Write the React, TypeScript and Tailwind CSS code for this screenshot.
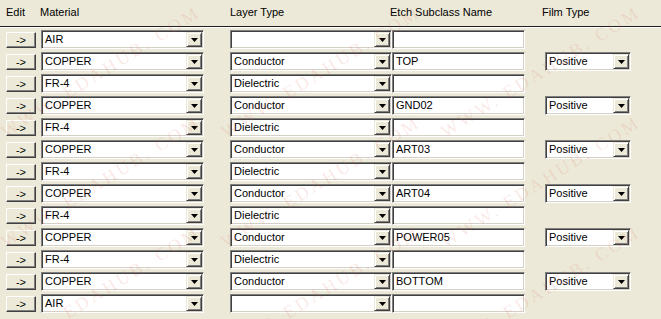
type Row = { material: string; layer: string; etch: string; film: string };

const rows: Row[] = [
  { material: "AIR", layer: "", etch: "", film: "" },
  { material: "COPPER", layer: "Conductor", etch: "TOP", film: "Positive" },
  { material: "FR-4", layer: "Dielectric", etch: "", film: "" },
  { material: "COPPER", layer: "Conductor", etch: "GND02", film: "Positive" },
  { material: "FR-4", layer: "Dielectric", etch: "", film: "" },
  { material: "COPPER", layer: "Conductor", etch: "ART03", film: "Positive" },
  { material: "FR-4", layer: "Dielectric", etch: "", film: "" },
  { material: "COPPER", layer: "Conductor", etch: "ART04", film: "Positive" },
  { material: "FR-4", layer: "Dielectric", etch: "", film: "" },
  { material: "COPPER", layer: "Conductor", etch: "POWER05", film: "Positive" },
  { material: "FR-4", layer: "Dielectric", etch: "", film: "" },
  { material: "COPPER", layer: "Conductor", etch: "BOTTOM", film: "Positive" },
  { material: "AIR", layer: "", etch: "", film: "" },
];

// watermark tiles, start points of each diagonal line
const marks: [number, number][] = [];
for (let j = 0; j < 3; j++) {
  for (let i = 0; i < 3; i++) {
    marks.push([10 + 220 * i, 140 + 110 * j]);
  }
}

const sunken =
  "border border-t-[#808080] border-l-[#808080] border-b-white border-r-white shadow-[inset_1px_1px_0_#404040,inset_-1px_-1px_0_#d4d0c8] bg-white";

function DropArrow() {
  return (
    <div className="h-full w-[16px] shrink-0 bg-[#ece9d8] border border-t-[#ece9d8] border-l-[#ece9d8] border-b-[#404040] border-r-[#404040] shadow-[inset_1px_1px_0_#fff,inset_-1px_-1px_0_#808080] flex items-center justify-center">
      <svg width="7" height="4" viewBox="0 0 7 4">
        <path d="M0 0h7L3.5 4z" fill="#000" />
      </svg>
    </div>
  );
}

function Combo({ value, width }: { value: string; width: string }) {
  return (
    <div className={`${sunken} ${width} h-[19px] flex items-stretch p-[1px] shrink-0`}>
      <div className="flex-1 pl-[2px] text-[11px] leading-[15px] text-black truncate">{value}</div>
      <DropArrow />
    </div>
  );
}

export default function App() {
  return (
    <div
      className="relative w-[661px] h-[319px] overflow-hidden bg-[#ece9d8] text-black"
      style={{ fontFamily: '"Liberation Sans", Arial, sans-serif' }}
    >
      {/* header */}
      <div className="flex h-[26px] items-center pl-[6px] text-[11px] pb-[2px]">
        <div className="w-[34px]">Edit</div>
        <div className="w-[190px]">Material</div>
        <div className="w-[160px]">Layer Type</div>
        <div className="w-[152px]">Etch Subclass Name</div>
        <div>Film Type</div>
      </div>
      <div className="h-[1px] bg-[#202020]" />
      <div className="h-[1px] bg-white" />

      <div className="mt-[2px] flex flex-col gap-[3px]">
        {rows.map((r, idx) => (
          <div key={idx} className="flex h-[19px] items-start">
            <button className="ml-[6px] mt-[2px] w-[30px] h-[16px] shrink-0 bg-[#ece9d8] border border-t-white border-l-white border-b-[#404040] border-r-[#404040] shadow-[inset_-1px_-1px_0_#808080] text-[11px] leading-[12px] text-black flex items-center justify-center">
              -&gt;
            </button>
            <div className="ml-[5px]">
              <Combo value={r.material} width="w-[163px]" />
            </div>
            <div className="ml-[26px]">
              <Combo value={r.layer} width="w-[162px]" />
            </div>
            <div className={`${sunken} w-[133px] h-[19px] shrink-0 pl-[3px] text-[11px] leading-[17px]`}>
              {r.etch}
            </div>
            {r.film && (
              <div className="ml-[20px]">
                <Combo value={r.film} width="w-[86px]" />
              </div>
            )}
          </div>
        ))}
      </div>

      {/* watermark overlay */}
      {marks.map(([x, y], k) => (
        <span
          key={k}
          className="pointer-events-none absolute origin-bottom-left whitespace-nowrap text-[18px] tracking-[3px] text-[rgba(215,90,70,0.14)]"
          style={{
            left: x,
            top: y - 22,
            transform: "rotate(-32deg)",
            fontFamily: '"Liberation Serif", "Times New Roman", serif',
          }}
        >
          WWW. EDAHUB. COM
        </span>
      ))}
    </div>
  );
}
